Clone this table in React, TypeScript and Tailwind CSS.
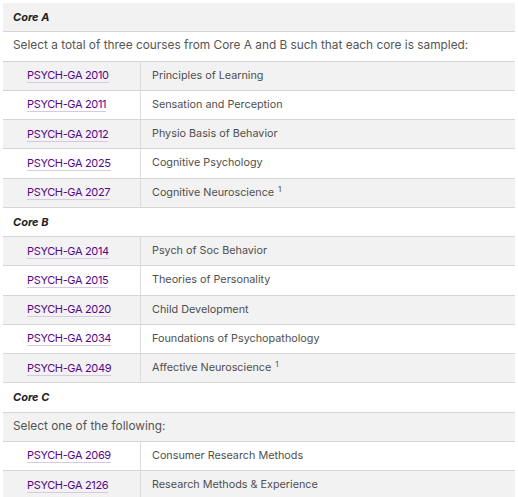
import React from "react";

type Row =
  | { kind: "head"; text: string }
  | { kind: "note"; text: string }
  | { kind: "course"; code: string; title: string; sup?: boolean };

const rows: Row[] = [
  { kind: "head", text: "Core A" },
  { kind: "note", text: "Select a total of three courses from Core A and B such that each core is sampled:" },
  { kind: "course", code: "PSYCH-GA 2010", title: "Principles of Learning" },
  { kind: "course", code: "PSYCH-GA 2011", title: "Sensation and Perception" },
  { kind: "course", code: "PSYCH-GA 2012", title: "Physio Basis of Behavior" },
  { kind: "course", code: "PSYCH-GA 2025", title: "Cognitive Psychology" },
  { kind: "course", code: "PSYCH-GA 2027", title: "Cognitive Neuroscience", sup: true },
  { kind: "head", text: "Core B" },
  { kind: "course", code: "PSYCH-GA 2014", title: "Psych of Soc Behavior" },
  { kind: "course", code: "PSYCH-GA 2015", title: "Theories of Personality" },
  { kind: "course", code: "PSYCH-GA 2020", title: "Child Development" },
  { kind: "course", code: "PSYCH-GA 2034", title: "Foundations of Psychopathology" },
  { kind: "course", code: "PSYCH-GA 2049", title: "Affective Neuroscience", sup: true },
  { kind: "head", text: "Core C" },
  { kind: "note", text: "Select one of the following:" },
  { kind: "course", code: "PSYCH-GA 2069", title: "Consumer Research Methods" },
  { kind: "course", code: "PSYCH-GA 2126", title: "Research Methods & Experience" },
];

export default function App() {
  return (
    <div
      className="w-[518px] h-[497px] overflow-hidden bg-white pl-[3px] pr-[3px] pt-[3px] text-[11px] text-[#4f4f4f]"
      style={{ fontFamily: "Inter, 'Noto Sans', sans-serif" }}
    >
      <div className="flex flex-col">
        {rows.map((r, i) => {
          const bg = i % 2 === 0 ? "bg-[#f2f2f2]" : "bg-white";
          if (r.kind === "head") {
            return (
              <div key={i} className={`${bg} h-[29.25px] border-b border-[#d6d6d6] flex items-center pl-[10px] font-bold italic text-[#222]`}>
                {r.text}
              </div>
            );
          }
          if (r.kind === "note") {
            return (
              <div key={i} className={`${bg} h-[29.25px] border-b border-[#d6d6d6] flex items-center pl-[10px] text-[11.85px] text-[#555]`}>
                {r.text}
              </div>
            );
          }
          return (
            <div key={i} className={`${bg} h-[29.25px] border-b border-[#d6d6d6] flex`}>
              <div className="w-[138px] shrink-0 border-r border-[#dcdcdc] flex items-center pl-[24px]">
                <span className="text-[#57068c] border-b border-[#d8c8e4] leading-[14px] tracking-[-0.35px]">{r.code}</span>
              </div>
              <div className="flex items-center pl-[11px] text-[10.8px]">
                <span>{r.title}</span>
                {r.sup && <span className="text-[8px] leading-none ml-[4px] relative -top-[4px]">1</span>}
              </div>
            </div>
          );
        })}
      </div>
    </div>
  );
}
